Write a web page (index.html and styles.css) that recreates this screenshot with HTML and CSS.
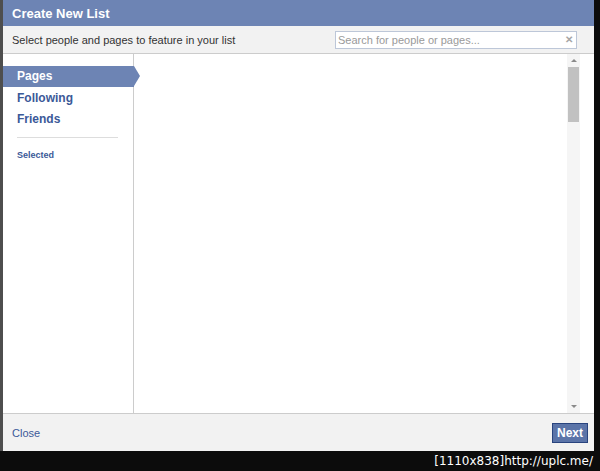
FILE: index.html
```html
<!DOCTYPE html>
<html>
  <head>
    <title>Create New List</title>
    <link rel="stylesheet" href="styles.css">
  </head>
  <body>
    <div class="dialog">
      <div class="dialog-title">Create New List</div>
      <div class="dialog-sub">
        <span>Select people and pages to feature in your list</span>
        <div class="search-box">
          <input type="text" placeholder="Search for people or pages...">
          <span class="clear">&#x2715;</span>
        </div>
      </div>
      <div class="dialog-body">
        <div class="side-nav">
          <div class="nav-item selected">Pages</div>
          <div class="nav-item">Following</div>
          <div class="nav-item">Friends</div>
          <div class="nav-sep"></div>
          <div class="nav-small">Selected</div>
        </div>
        <div class="list-pane">
          <div class="list-content"></div>
          <div class="scroll-bar">
            <div class="arrow up"></div>
            <div class="track">
              <div class="thumb"></div>
            </div>
            <div class="arrow down"></div>
          </div>
        </div>
      </div>
      <div class="dialog-foot">
        <a href="#" class="close-link">Close</a>
        <button class="next-btn">Next</button>
      </div>
    </div>
    <div class="watermark">[1110x838]http://uplc.me/</div>
  </body>
</html>
```

FILE: styles.css
```css
body {
  margin: 0;
  background-color: #0c0c0c;
  font-family: "Liberation Sans", Arial, sans-serif;
  font-size: 11px;
  width: 600px;
  height: 471px;
  overflow: hidden;
}

.dialog {
  width: 591px;
  height: 451px;
  border-left: 3px solid #4e4e4e;
  display: flex;
  flex-direction: column;
  background-color: #fff;
}

.dialog-title {
  height: 26px;
  line-height: 27px;
  background-color: #6d84b4;
  color: #fff;
  font-size: 13px;
  font-weight: bold;
  padding-left: 9px;
  flex-shrink: 0;
}

.dialog-sub {
  height: 27px;
  background-color: #f2f2f2;
  border-bottom: 1px solid #cccccc;
  display: flex;
  align-items: center;
  justify-content: space-between;
  padding: 0 17px 0 9px;
  color: #333;
  flex-shrink: 0;
}

.search-box {
  position: relative;
  width: 242px;
  height: 18px;
}

.search-box input {
  box-sizing: border-box;
  width: 100%;
  height: 18px;
  border: 1px solid #bdc7d8;
  padding: 0 16px 0 2px;
  font-family: "Liberation Sans", Arial, sans-serif;
  font-size: 11px;
  outline: none;
}

.search-box input::placeholder {
  color: #9a9a9a;
}

.search-box .clear {
  position: absolute;
  right: 4px;
  top: 3px;
  color: #a6a6a6;
  font-size: 10px;
  font-weight: bold;
}

.dialog-body {
  flex: 1;
  display: flex;
  min-height: 0;
}

.side-nav {
  width: 130px;
  border-right: 1px solid #cccccc;
  padding-top: 12px;
  flex-shrink: 0;
}

.nav-item {
  position: relative;
  height: 21px;
  line-height: 21px;
  padding-left: 14px;
  color: #3b5998;
  font-size: 12px;
  font-weight: bold;
}

.nav-item.selected {
  background-color: #6d84b4;
  color: #fff;
  margin-right: -1px;
  margin-bottom: 1px;
}

.nav-item.selected::after {
  content: "";
  position: absolute;
  right: -6px;
  top: 0;
  border-top: 10.5px solid transparent;
  border-bottom: 10.5px solid transparent;
  border-left: 6px solid #6d84b4;
}

.nav-sep {
  height: 1px;
  background-color: #dddddd;
  margin: 7px 15px 10px 14px;
}

.nav-small {
  padding-left: 14px;
  color: #3b5998;
  font-size: 9px;
  font-weight: bold;
  line-height: 14px;
}

.list-pane {
  flex: 1;
  display: flex;
  padding-right: 14px;
}

.list-content {
  flex: 1;
}

.scroll-bar {
  width: 13px;
  display: flex;
  flex-direction: column;
  background-color: #f5f5f5;
}

.arrow {
  height: 13px;
  display: flex;
  align-items: center;
  justify-content: center;
}

.arrow::before {
  content: "";
  border-left: 3px solid transparent;
  border-right: 3px solid transparent;
}

.arrow.up::before {
  border-bottom: 3px solid #8a8a8a;
}

.arrow.down::before {
  border-top: 3px solid #8a8a8a;
}

.track {
  flex: 1;
}

.thumb {
  width: 11px;
  height: 55px;
  margin: 0 auto;
  background-color: #c1c1c1;
}

.dialog-foot {
  height: 37px;
  border-top: 1px solid #cccccc;
  background-color: #f2f2f2;
  display: flex;
  align-items: center;
  justify-content: space-between;
  padding: 0 6px 0 9px;
  flex-shrink: 0;
}

.close-link {
  color: #3b5998;
  text-decoration: none;
  font-size: 11px;
}

.next-btn {
  height: 20px;
  padding: 0 4px;
  background-color: #5b74a8;
  border: 1px solid #29447e;
  color: #fff;
  font-family: "Liberation Sans", Arial, sans-serif;
  font-size: 12px;
  font-weight: bold;
}

.watermark {
  height: 20px;
  line-height: 20px;
  text-align: right;
  padding-right: 7px;
  color: #fff;
  font-family: "DejaVu Sans", sans-serif;
  font-size: 12px;
}
```
